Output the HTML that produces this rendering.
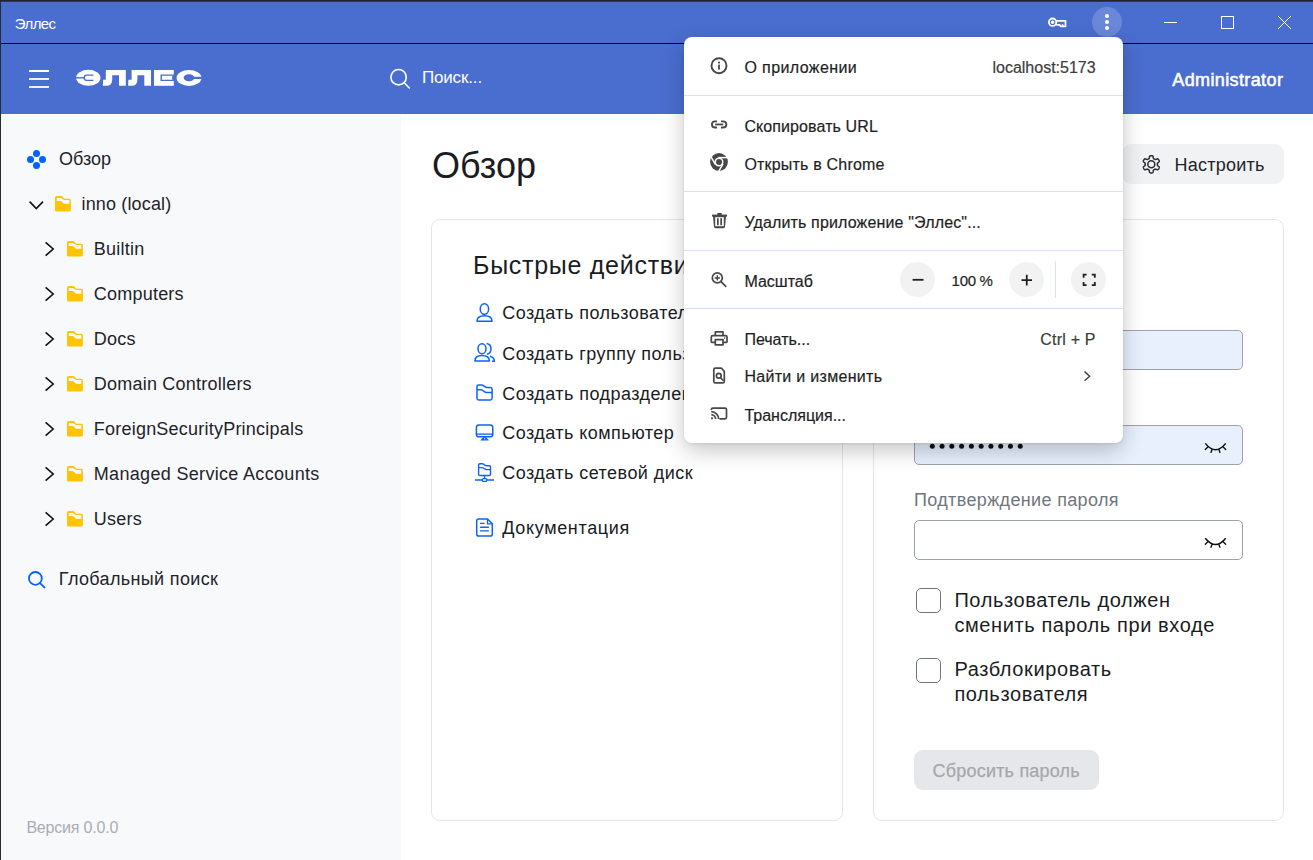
<!DOCTYPE html>
<html><head><meta charset="utf-8">
<style>
*{box-sizing:border-box;margin:0;padding:0}
html,body{width:1313px;height:860px;overflow:hidden;background:#fff;font-family:"Liberation Sans",sans-serif;color:#1f2329}
.abs{position:absolute}
#topborder{position:absolute;left:0;top:0;width:1313px;height:2px;background:linear-gradient(#232527 0 1px,#2e3850 1px 2px)}
#leftborder{position:absolute;left:0;top:0;width:1px;height:860px;background:#2b2b2b}
#titlebar{position:absolute;left:1px;top:1px;width:1312px;height:42px;background:#4a6ecf}
#tbline{position:absolute;left:1px;top:43px;width:1312px;height:1px;background:#000}
#header{position:absolute;left:1px;top:44px;width:1312px;height:70px;background:#4a6ecf}
#sidebar{position:absolute;left:1px;top:115px;width:400px;height:745px;background:#f8f9fb}
.t{position:absolute;white-space:nowrap;line-height:1}
.card{position:absolute;border:1px solid #e4e6ea;border-radius:9px;background:#fff}
</style></head><body>
<div id="titlebar"></div>
<div id="tbline"></div>
<div id="header"></div>
<div id="sidebar"></div>
<div class="t" style="left:14.8px;top:16.45px;font-size:15px;color:#ffffff;letter-spacing:-0.6px;">Эллес</div>
<svg class="abs" style="left:1040px;top:10px" width="34" height="24" viewBox="1040 10 34 24">
<circle cx="1052.6" cy="22.2" r="3.7" fill="none" stroke="#fff" stroke-width="1.8"/>
<circle cx="1052.6" cy="22.2" r="1.7" fill="#fff"/>
<path d="M1056.2 20.8 H1065.5 V26.3 H1060.6 L1059.6 24.8 H1056.2" fill="none" stroke="#fff" stroke-width="1.8" stroke-linejoin="round"/>
<rect x="1061.8" y="24.2" width="1.6" height="2.4" fill="#fff"/>
</svg><div class="abs" style="left:1092px;top:6.5px;width:30px;height:30px;border-radius:50%;background:rgba(255,255,255,0.18)"></div>
<div class="abs" style="left:1105px;top:14px;width:4px;height:4px;border-radius:50%;background:#fff"></div>
<div class="abs" style="left:1105px;top:20px;width:4px;height:4px;border-radius:50%;background:#fff"></div>
<div class="abs" style="left:1105px;top:26px;width:4px;height:4px;border-radius:50%;background:#fff"></div>
<svg class="abs" style="left:1150px;top:5px" width="160" height="34" viewBox="1150 5 160 34">
<path d="M1164 22.5 H1177" stroke="#fff" stroke-width="1"/>
<rect x="1221.5" y="16.5" width="12" height="12" fill="none" stroke="#fff" stroke-width="1"/>
<path d="M1278 16 L1291 29 M1291 16 L1278 29" stroke="#fff" stroke-width="1"/>
</svg><svg class="abs" style="left:25px;top:64px" width="30" height="30" viewBox="25 64 30 30">
<rect x="29" y="70" width="20" height="2" fill="#fff"/><rect x="29" y="78" width="20" height="2" fill="#eef0fa"/><rect x="29" y="86" width="20" height="2" fill="#eef0fa"/>
</svg><svg class="abs" style="left:70px;top:62px" width="140" height="32" viewBox="70 62 140 32">
<g fill="#fff">
 <ellipse cx="88.3" cy="77.8" rx="12.2" ry="8"/>
 <path d="M102.8 85.8 L103.2 79.7 H105.8 V70 H125.8 V85.8 H119 V75.2 H112.2 V79.5 Q112.2 85.8 106.5 85.8 Z"/>
 <path d="M128.1 85.8 L128.4 79.7 H131.6 V70 H151 V85.8 H144.3 V75.2 H137.4 V79.5 Q137.4 85.8 131.8 85.8 Z"/>
 <path d="M154 70 H173.8 V85.8 H154 Z"/>
 <ellipse cx="189" cy="77.9" rx="12.4" ry="8"/>
</g>
<g fill="none" stroke="#4a6ecf" stroke-width="1.4">
 <path d="M75 77.8 H84.3"/>
 <path d="M93.5 75.1 H86.5 Q84.2 75.1 84.2 77.8 Q84.2 80.4 86.5 80.4 H93.5"/>
 <path d="M175 75.1 H161.2 V80.4 H175"/>
</g>
<g fill="#4a6ecf">
 <rect x="172.2" y="75.6" width="3" height="4.3"/>
 <ellipse cx="189" cy="77.7" rx="5.4" ry="3.5"/>
 <rect x="189" y="76.8" width="14" height="2.2"/>
</g>
</svg><svg class="abs" style="left:385px;top:64px" width="30" height="30" viewBox="385 64 30 30">
<circle cx="398.6" cy="77.2" r="7.7" fill="none" stroke="#fff" stroke-width="1.6"/>
<path d="M404.2 82.8 L409.3 88" stroke="#fff" stroke-width="1.6" stroke-linecap="round"/>
</svg><div class="t" style="left:421.9px;top:68.55px;font-size:17px;color:#ffffff;letter-spacing:-0.15px;">Поиск...</div>
<div class="t" style="left:1172.3px;top:70.70px;font-size:18px;color:#ffffff;letter-spacing:0.38px;-webkit-text-stroke:0.55px #fff;">Administrator</div>
<svg class="abs" style="left:22px;top:145px" width="30" height="30" viewBox="22 145 30 30">
<g fill="#0062ff"><circle cx="36.5" cy="153.4" r="3.5"/><circle cx="30.5" cy="159.4" r="3.5"/><circle cx="42.5" cy="159.4" r="3.5"/><circle cx="36.5" cy="165.4" r="3.5"/></g>
</svg><div class="t" style="left:59px;top:150.00px;font-size:18px;color:#1f2329;">Обзор</div>
<svg class="abs" style="left:25px;top:195px" width="24" height="20" viewBox="25 195 24 20">
<path d="M29.6 201.6 L36.3 208.6 L43 201.6" fill="none" stroke="#111" stroke-width="1.6"/>
</svg><svg class="abs" style="left:55px;top:196.3px" width="16" height="16" viewBox="0 0 16 16">
<path d="M0,1.5 Q0,0 1.5,0 H5.8 Q6.6,0 7.3,0.6 L8.6,1.9 Q9.3,2.8 10.3,2.8 H14.4 Q15.9,2.8 15.9,4.3 V14.1 Q15.9,15.6 14.4,15.6 H1.5 Q0,15.6 0,14.1 Z" fill="#ffc400"/>
<path d="M1.8,2 H5.6 Q6.4,2 7.1,2.7 L8.3,3.6 Q8.9,4.1 9.8,4.1 H14.3 V7.8 H9.8 Q8.9,7.8 8.3,7.2 L7.1,6 Q6.4,5.1 5.6,5.1 H1.8 Z" fill="#f8f9fb"/>
</svg><div class="t" style="left:81.5px;top:194.90px;font-size:18px;color:#1f2329;letter-spacing:0.15px;">inno (local)</div>
<svg class="abs" style="left:40px;top:239px" width="20" height="20" viewBox="0 0 20 20">
<path d="M5.6 3.3 L13.2 10 L5.6 16.7" fill="none" stroke="#111" stroke-width="1.6"/>
</svg><svg class="abs" style="left:67px;top:241px" width="16" height="16" viewBox="0 0 16 16">
<path d="M0,1.5 Q0,0 1.5,0 H5.8 Q6.6,0 7.3,0.6 L8.6,1.9 Q9.3,2.8 10.3,2.8 H14.4 Q15.9,2.8 15.9,4.3 V14.1 Q15.9,15.6 14.4,15.6 H1.5 Q0,15.6 0,14.1 Z" fill="#ffc400"/>
<path d="M1.8,2 H5.6 Q6.4,2 7.1,2.7 L8.3,3.6 Q8.9,4.1 9.8,4.1 H14.3 V7.8 H9.8 Q8.9,7.8 8.3,7.2 L7.1,6 Q6.4,5.1 5.6,5.1 H1.8 Z" fill="#f8f9fb"/>
</svg><div class="t" style="left:93.8px;top:240.30px;font-size:18px;color:#1f2329;letter-spacing:0.22px;">Builtin</div>
<svg class="abs" style="left:40px;top:284px" width="20" height="20" viewBox="0 0 20 20">
<path d="M5.6 3.3 L13.2 10 L5.6 16.7" fill="none" stroke="#111" stroke-width="1.6"/>
</svg><svg class="abs" style="left:67px;top:286px" width="16" height="16" viewBox="0 0 16 16">
<path d="M0,1.5 Q0,0 1.5,0 H5.8 Q6.6,0 7.3,0.6 L8.6,1.9 Q9.3,2.8 10.3,2.8 H14.4 Q15.9,2.8 15.9,4.3 V14.1 Q15.9,15.6 14.4,15.6 H1.5 Q0,15.6 0,14.1 Z" fill="#ffc400"/>
<path d="M1.8,2 H5.6 Q6.4,2 7.1,2.7 L8.3,3.6 Q8.9,4.1 9.8,4.1 H14.3 V7.8 H9.8 Q8.9,7.8 8.3,7.2 L7.1,6 Q6.4,5.1 5.6,5.1 H1.8 Z" fill="#f8f9fb"/>
</svg><div class="t" style="left:93.8px;top:285.30px;font-size:18px;color:#1f2329;letter-spacing:0.22px;">Computers</div>
<svg class="abs" style="left:40px;top:329px" width="20" height="20" viewBox="0 0 20 20">
<path d="M5.6 3.3 L13.2 10 L5.6 16.7" fill="none" stroke="#111" stroke-width="1.6"/>
</svg><svg class="abs" style="left:67px;top:331px" width="16" height="16" viewBox="0 0 16 16">
<path d="M0,1.5 Q0,0 1.5,0 H5.8 Q6.6,0 7.3,0.6 L8.6,1.9 Q9.3,2.8 10.3,2.8 H14.4 Q15.9,2.8 15.9,4.3 V14.1 Q15.9,15.6 14.4,15.6 H1.5 Q0,15.6 0,14.1 Z" fill="#ffc400"/>
<path d="M1.8,2 H5.6 Q6.4,2 7.1,2.7 L8.3,3.6 Q8.9,4.1 9.8,4.1 H14.3 V7.8 H9.8 Q8.9,7.8 8.3,7.2 L7.1,6 Q6.4,5.1 5.6,5.1 H1.8 Z" fill="#f8f9fb"/>
</svg><div class="t" style="left:93.8px;top:330.30px;font-size:18px;color:#1f2329;letter-spacing:0.22px;">Docs</div>
<svg class="abs" style="left:40px;top:374px" width="20" height="20" viewBox="0 0 20 20">
<path d="M5.6 3.3 L13.2 10 L5.6 16.7" fill="none" stroke="#111" stroke-width="1.6"/>
</svg><svg class="abs" style="left:67px;top:376px" width="16" height="16" viewBox="0 0 16 16">
<path d="M0,1.5 Q0,0 1.5,0 H5.8 Q6.6,0 7.3,0.6 L8.6,1.9 Q9.3,2.8 10.3,2.8 H14.4 Q15.9,2.8 15.9,4.3 V14.1 Q15.9,15.6 14.4,15.6 H1.5 Q0,15.6 0,14.1 Z" fill="#ffc400"/>
<path d="M1.8,2 H5.6 Q6.4,2 7.1,2.7 L8.3,3.6 Q8.9,4.1 9.8,4.1 H14.3 V7.8 H9.8 Q8.9,7.8 8.3,7.2 L7.1,6 Q6.4,5.1 5.6,5.1 H1.8 Z" fill="#f8f9fb"/>
</svg><div class="t" style="left:93.8px;top:375.30px;font-size:18px;color:#1f2329;letter-spacing:0.22px;">Domain Controllers</div>
<svg class="abs" style="left:40px;top:419px" width="20" height="20" viewBox="0 0 20 20">
<path d="M5.6 3.3 L13.2 10 L5.6 16.7" fill="none" stroke="#111" stroke-width="1.6"/>
</svg><svg class="abs" style="left:67px;top:421px" width="16" height="16" viewBox="0 0 16 16">
<path d="M0,1.5 Q0,0 1.5,0 H5.8 Q6.6,0 7.3,0.6 L8.6,1.9 Q9.3,2.8 10.3,2.8 H14.4 Q15.9,2.8 15.9,4.3 V14.1 Q15.9,15.6 14.4,15.6 H1.5 Q0,15.6 0,14.1 Z" fill="#ffc400"/>
<path d="M1.8,2 H5.6 Q6.4,2 7.1,2.7 L8.3,3.6 Q8.9,4.1 9.8,4.1 H14.3 V7.8 H9.8 Q8.9,7.8 8.3,7.2 L7.1,6 Q6.4,5.1 5.6,5.1 H1.8 Z" fill="#f8f9fb"/>
</svg><div class="t" style="left:93.8px;top:420.30px;font-size:18px;color:#1f2329;letter-spacing:0.22px;">ForeignSecurityPrincipals</div>
<svg class="abs" style="left:40px;top:464px" width="20" height="20" viewBox="0 0 20 20">
<path d="M5.6 3.3 L13.2 10 L5.6 16.7" fill="none" stroke="#111" stroke-width="1.6"/>
</svg><svg class="abs" style="left:67px;top:466px" width="16" height="16" viewBox="0 0 16 16">
<path d="M0,1.5 Q0,0 1.5,0 H5.8 Q6.6,0 7.3,0.6 L8.6,1.9 Q9.3,2.8 10.3,2.8 H14.4 Q15.9,2.8 15.9,4.3 V14.1 Q15.9,15.6 14.4,15.6 H1.5 Q0,15.6 0,14.1 Z" fill="#ffc400"/>
<path d="M1.8,2 H5.6 Q6.4,2 7.1,2.7 L8.3,3.6 Q8.9,4.1 9.8,4.1 H14.3 V7.8 H9.8 Q8.9,7.8 8.3,7.2 L7.1,6 Q6.4,5.1 5.6,5.1 H1.8 Z" fill="#f8f9fb"/>
</svg><div class="t" style="left:93.8px;top:465.30px;font-size:18px;color:#1f2329;letter-spacing:0.32px;">Managed Service Accounts</div>
<svg class="abs" style="left:40px;top:509px" width="20" height="20" viewBox="0 0 20 20">
<path d="M5.6 3.3 L13.2 10 L5.6 16.7" fill="none" stroke="#111" stroke-width="1.6"/>
</svg><svg class="abs" style="left:67px;top:511px" width="16" height="16" viewBox="0 0 16 16">
<path d="M0,1.5 Q0,0 1.5,0 H5.8 Q6.6,0 7.3,0.6 L8.6,1.9 Q9.3,2.8 10.3,2.8 H14.4 Q15.9,2.8 15.9,4.3 V14.1 Q15.9,15.6 14.4,15.6 H1.5 Q0,15.6 0,14.1 Z" fill="#ffc400"/>
<path d="M1.8,2 H5.6 Q6.4,2 7.1,2.7 L8.3,3.6 Q8.9,4.1 9.8,4.1 H14.3 V7.8 H9.8 Q8.9,7.8 8.3,7.2 L7.1,6 Q6.4,5.1 5.6,5.1 H1.8 Z" fill="#f8f9fb"/>
</svg><div class="t" style="left:93.8px;top:510.30px;font-size:18px;color:#1f2329;letter-spacing:0.22px;">Users</div>
<svg class="abs" style="left:22px;top:564px" width="30" height="30" viewBox="22 564 30 30">
<circle cx="35.4" cy="578.4" r="6.4" fill="none" stroke="#0062ff" stroke-width="1.8"/>
<path d="M40 583.2 L44.4 587.4" stroke="#0062ff" stroke-width="1.8" stroke-linecap="round"/>
</svg><div class="t" style="left:58.8px;top:570.20px;font-size:18px;color:#1f2329;letter-spacing:0.35px;">Глобальный поиск</div>
<div class="t" style="left:26.4px;top:820.40px;font-size:16px;color:#a9adb3;letter-spacing:-0.2px;">Версия 0.0.0</div>
<div class="t" style="left:432px;top:148.20px;font-size:36px;color:#1a1c1f;">Обзор</div>
<div class="abs" style="left:1122px;top:144px;width:162px;height:40px;border-radius:9px;background:#f1f2f4"></div><svg class="abs" style="left:1136px;top:149px" width="30" height="30" viewBox="1136 149 30 30">
<path d="M1157.35 164.30 L1157.35 164.46 L1157.35 164.62 L1157.35 164.78 L1157.36 164.94 L1157.38 165.10 L1157.43 165.27 L1157.53 165.45 L1157.72 165.66 L1158.02 165.91 L1158.40 166.20 L1158.77 166.51 L1159.04 166.81 L1159.18 167.09 L1159.23 167.34 L1159.22 167.58 L1159.16 167.80 L1159.09 168.02 L1159.00 168.22 L1158.90 168.43 L1158.79 168.62 L1158.67 168.82 L1158.55 169.01 L1158.41 169.19 L1158.26 169.36 L1158.10 169.52 L1157.90 169.65 L1157.66 169.73 L1157.35 169.75 L1156.95 169.66 L1156.50 169.50 L1156.06 169.31 L1155.69 169.18 L1155.41 169.12 L1155.20 169.12 L1155.03 169.16 L1154.88 169.23 L1154.74 169.30 L1154.60 169.38 L1154.46 169.46 L1154.33 169.54 L1154.19 169.62 L1154.05 169.70 L1153.91 169.78 L1153.78 169.86 L1153.65 169.96 L1153.52 170.09 L1153.41 170.27 L1153.33 170.54 L1153.26 170.92 L1153.20 171.40 L1153.12 171.88 L1152.99 172.26 L1152.82 172.52 L1152.63 172.69 L1152.42 172.80 L1152.20 172.86 L1151.98 172.90 L1151.75 172.93 L1151.53 172.95 L1151.30 172.95 L1151.07 172.95 L1150.85 172.93 L1150.62 172.90 L1150.40 172.86 L1150.18 172.80 L1149.97 172.69 L1149.78 172.52 L1149.61 172.26 L1149.48 171.88 L1149.40 171.40 L1149.34 170.92 L1149.27 170.54 L1149.19 170.27 L1149.08 170.09 L1148.95 169.96 L1148.82 169.86 L1148.69 169.78 L1148.55 169.70 L1148.41 169.62 L1148.27 169.54 L1148.14 169.46 L1148.00 169.38 L1147.86 169.30 L1147.72 169.23 L1147.57 169.16 L1147.40 169.12 L1147.19 169.12 L1146.91 169.18 L1146.54 169.31 L1146.10 169.50 L1145.65 169.66 L1145.25 169.75 L1144.94 169.73 L1144.70 169.65 L1144.50 169.52 L1144.34 169.36 L1144.19 169.19 L1144.05 169.01 L1143.93 168.82 L1143.81 168.62 L1143.70 168.43 L1143.60 168.22 L1143.51 168.02 L1143.44 167.80 L1143.38 167.58 L1143.37 167.34 L1143.42 167.09 L1143.56 166.81 L1143.83 166.51 L1144.20 166.20 L1144.58 165.91 L1144.88 165.66 L1145.07 165.45 L1145.17 165.27 L1145.22 165.10 L1145.24 164.94 L1145.25 164.78 L1145.25 164.62 L1145.25 164.46 L1145.25 164.30 L1145.25 164.14 L1145.25 163.98 L1145.25 163.82 L1145.24 163.66 L1145.22 163.50 L1145.17 163.33 L1145.07 163.15 L1144.88 162.94 L1144.58 162.69 L1144.20 162.40 L1143.83 162.09 L1143.56 161.79 L1143.42 161.51 L1143.37 161.26 L1143.38 161.02 L1143.44 160.80 L1143.51 160.58 L1143.60 160.38 L1143.70 160.17 L1143.81 159.98 L1143.93 159.78 L1144.05 159.59 L1144.19 159.41 L1144.34 159.24 L1144.50 159.08 L1144.70 158.95 L1144.94 158.87 L1145.25 158.85 L1145.65 158.94 L1146.10 159.10 L1146.54 159.29 L1146.91 159.42 L1147.19 159.48 L1147.40 159.48 L1147.57 159.44 L1147.72 159.37 L1147.86 159.30 L1148.00 159.22 L1148.14 159.14 L1148.27 159.06 L1148.41 158.98 L1148.55 158.90 L1148.69 158.82 L1148.82 158.74 L1148.95 158.64 L1149.08 158.51 L1149.19 158.33 L1149.27 158.06 L1149.34 157.68 L1149.40 157.20 L1149.48 156.72 L1149.61 156.34 L1149.78 156.08 L1149.97 155.91 L1150.18 155.80 L1150.40 155.74 L1150.62 155.70 L1150.85 155.67 L1151.07 155.65 L1151.30 155.65 L1151.53 155.65 L1151.75 155.67 L1151.98 155.70 L1152.20 155.74 L1152.42 155.80 L1152.63 155.91 L1152.82 156.08 L1152.99 156.34 L1153.12 156.72 L1153.20 157.20 L1153.26 157.68 L1153.33 158.06 L1153.41 158.33 L1153.52 158.51 L1153.65 158.64 L1153.78 158.74 L1153.91 158.82 L1154.05 158.90 L1154.19 158.98 L1154.33 159.06 L1154.46 159.14 L1154.60 159.22 L1154.74 159.30 L1154.88 159.37 L1155.03 159.44 L1155.20 159.48 L1155.41 159.48 L1155.69 159.42 L1156.06 159.29 L1156.50 159.10 L1156.95 158.94 L1157.35 158.85 L1157.66 158.87 L1157.90 158.95 L1158.10 159.08 L1158.26 159.24 L1158.41 159.41 L1158.55 159.59 L1158.67 159.78 L1158.79 159.98 L1158.90 160.17 L1159.00 160.38 L1159.09 160.58 L1159.16 160.80 L1159.22 161.02 L1159.23 161.26 L1159.18 161.51 L1159.04 161.79 L1158.77 162.09 L1158.40 162.40 L1158.02 162.69 L1157.72 162.94 L1157.53 163.15 L1157.43 163.33 L1157.38 163.50 L1157.36 163.66 L1157.35 163.82 L1157.35 163.98 L1157.35 164.14 Z" fill="none" stroke="#2a2d31" stroke-width="1.5" stroke-linejoin="round"/>
<circle cx="1151.3" cy="164.3" r="3.5" fill="none" stroke="#2a2d31" stroke-width="1.5"/>
</svg><div class="t" style="left:1174.4px;top:155.70px;font-size:18px;color:#1f2329;letter-spacing:0.25px;">Настроить</div>
<div class="card" style="left:431px;top:219px;width:412px;height:602px"></div><div class="t" style="left:473px;top:252.95px;font-size:25px;color:#1a1c1f;letter-spacing:0.72px;">Быстрые действия</div>
<svg class="abs" style="left:0;top:0" width="1313" height="860" viewBox="0 0 1313 860"><ellipse cx="484.4" cy="309" rx="4.2" ry="5.3" fill="none" stroke="#0a64f5" stroke-width="1.5"/>
<path d="M477 321.2 Q477 315.8 484.5 315.8 Q492 315.8 492 321.2 Z" fill="none" stroke="#0a64f5" stroke-width="1.5" stroke-linejoin="round"/><ellipse cx="482" cy="348.8" rx="4" ry="5" fill="none" stroke="#0a64f5" stroke-width="1.5"/>
<path d="M474.9 361 Q474.9 355.5 482 355.5 Q489.4 355.5 489.4 361 Z" fill="none" stroke="#0a64f5" stroke-width="1.5" stroke-linejoin="round"/>
<path d="M486.6 343.5 Q491 344.1 491 348.8 Q491 353.6 486.9 354.2 M490 356.3 Q494.4 357.6 494.4 361.2 H492" fill="none" stroke="#0a64f5" stroke-width="1.5"/><path d="M477 398.2 V386.6 Q477 384.9 478.7 384.9 H481.3 Q482.9 384.9 484 386.1 Q485.2 387.4 487 387.4 H490.4 Q492.1 387.4 492.1 389.1 V398.2 Q492.1 399.9 490.4 399.9 H478.7 Q477 399.9 477 398.2 Z" fill="none" stroke="#0a64f5" stroke-width="1.5" stroke-linejoin="round"/>
<path d="M477 389.8 H480.8 Q482.4 389.8 483.5 391.1 Q484.7 392.4 486.5 392.4 H492.1" fill="none" stroke="#0a64f5" stroke-width="1.5"/><rect x="476.4" y="424.9" width="16.4" height="11.9" rx="2.6" fill="none" stroke="#0a64f5" stroke-width="1.5"/>
<path d="M476.6 434.1 H492.6" stroke="#0a64f5" stroke-width="1.3"/>
<path d="M482.9 437.2 H486.3 L488.9 440.6 H480.3 Z" fill="#0a64f5"/>
<rect x="484.2" y="438.1" width="1" height="1.2" fill="#fff"/><path d="M478.6 474.3 V465 Q478.6 463.8 479.8 463.8 H482 Q483.3 463.8 484.3 464.8 Q485.4 465.8 486.9 465.8 H489.3 Q490.5 465.8 490.5 467 V474.3 Q490.5 475.5 489.3 475.5 H479.8 Q478.6 475.5 478.6 474.3 Z" fill="none" stroke="#0a64f5" stroke-width="1.4" stroke-linejoin="round"/>
<path d="M478.6 467.6 H481.8 Q483.1 467.6 484.1 468.6 Q485.2 469.6 486.7 469.6 H490.5" fill="none" stroke="#0a64f5" stroke-width="1.4"/>
<path d="M484.5 475 V478.5 M475 480 H482.3 M486.7 480 H494" stroke="#0a64f5" stroke-width="1.4"/>
<rect x="482.3" y="478.6" width="4.4" height="2.8" rx="1" fill="none" stroke="#0a64f5" stroke-width="1.3"/><path d="M478.7 519 H487.5 L492.3 523.8 V534 Q492.3 536.1 490.3 536.1 H478.7 Q476.7 536.1 476.7 534 V521 Q476.7 519 478.7 519 Z" fill="none" stroke="#0a64f5" stroke-width="1.5" stroke-linejoin="round"/>
<path d="M487.5 519 V523.8 H492.3" fill="none" stroke="#0a64f5" stroke-width="1.3"/>
<path d="M480.6 523.4 H484 M480.6 527.3 H488.4 M480.6 530.9 H488.4" stroke-linecap="round" stroke="#0a64f5" stroke-width="1.4"/></svg><div class="t" style="left:502.3px;top:304.40px;font-size:18px;color:#1a1c1f;letter-spacing:0.45px;">Создать пользователя</div>
<div class="t" style="left:502.3px;top:344.50px;font-size:18px;color:#1a1c1f;letter-spacing:0.45px;">Создать группу пользователей</div>
<div class="t" style="left:502.3px;top:384.60px;font-size:18px;color:#1a1c1f;letter-spacing:0.45px;">Создать подразделение</div>
<div class="t" style="left:502.3px;top:424.30px;font-size:18px;color:#1a1c1f;letter-spacing:0.45px;">Создать компьютер</div>
<div class="t" style="left:502.3px;top:464.00px;font-size:18px;color:#1a1c1f;letter-spacing:0.45px;">Создать сетевой диск</div>
<div class="t" style="left:502.3px;top:519.40px;font-size:18px;color:#1a1c1f;letter-spacing:0.65px;">Документация</div>
<div class="card" style="left:873px;top:219px;width:411px;height:602px"></div><div class="t" style="left:914px;top:270.70px;font-size:18px;color:#6b7075;letter-spacing:0.35px;">Новый пароль</div>
<div class="abs" style="left:914px;top:330px;width:329px;height:40px;border:1px solid #9ea3aa;border-radius:5px;background:#e8f0fe"></div><div class="t" style="left:914px;top:396.70px;font-size:18px;color:#6b7075;letter-spacing:0.35px;">Пароль</div>
<div class="abs" style="left:914px;top:425px;width:329px;height:40px;border:1px solid #9ea3aa;border-radius:5px;background:#e8f0fe"></div><div class="t" style="left:914px;top:490.50px;font-size:18px;color:#71767c;letter-spacing:0.35px;">Подтверждение пароля</div>
<div class="abs" style="left:914px;top:520px;width:329px;height:40px;border:1px solid #9ea3aa;border-radius:5px;background:#fff"></div><div class="abs" style="left:915.5px;top:588px;width:25px;height:25px;border:1.3px solid #70757b;border-radius:5px;background:#fff"></div><div class="t" style="left:954.4px;top:589.80px;font-size:20px;color:#1a1c1f;letter-spacing:0.6px;">Пользователь должен</div>
<div class="t" style="left:954.4px;top:614.60px;font-size:20px;color:#1a1c1f;letter-spacing:0.6px;">сменить пароль при входе</div>
<div class="abs" style="left:915.5px;top:658px;width:25px;height:25px;border:1.3px solid #70757b;border-radius:5px;background:#fff"></div><div class="t" style="left:954.4px;top:659.40px;font-size:20px;color:#1a1c1f;letter-spacing:0.6px;">Разблокировать</div>
<div class="t" style="left:954.4px;top:684.10px;font-size:20px;color:#1a1c1f;letter-spacing:0.6px;">пользователя</div>
<div class="abs" style="left:914px;top:750px;width:185px;height:40px;border-radius:9px;background:#e6e7ea"></div><div class="t" style="left:932.6px;top:761.70px;font-size:18px;color:#a4a7ac;letter-spacing:0.2px;-webkit-text-stroke:0.25px #a4a7ac;">Сбросить пароль</div>
<svg class="abs" style="left:0;top:0" width="1313" height="860" viewBox="0 0 1313 860"><circle cx="932.30" cy="446.3" r="2.5" fill="#111"/><circle cx="942.07" cy="446.3" r="2.5" fill="#111"/><circle cx="951.84" cy="446.3" r="2.5" fill="#111"/><circle cx="961.61" cy="446.3" r="2.5" fill="#111"/><circle cx="971.38" cy="446.3" r="2.5" fill="#111"/><circle cx="981.15" cy="446.3" r="2.5" fill="#111"/><circle cx="990.92" cy="446.3" r="2.5" fill="#111"/><circle cx="1000.69" cy="446.3" r="2.5" fill="#111"/><circle cx="1010.46" cy="446.3" r="2.5" fill="#111"/><circle cx="1020.23" cy="446.3" r="2.5" fill="#111"/><path d="M1205.3 443.4 Q1215.5 456.0 1225.7 443.4" fill="none" stroke="#111" stroke-width="1.5"/>
<path d="M1207.8 447.0 L1205.3 449.4 M1212 449.59999999999997 L1211 452.4 M1218.9 449.59999999999997 L1219.9 452.4 M1223.2 447.0 L1225.7 449.4" stroke="#111" stroke-width="1.4" stroke-linecap="round"/><path d="M1205.3 538.2 Q1215.5 550.8000000000001 1225.7 538.2" fill="none" stroke="#111" stroke-width="1.5"/>
<path d="M1207.8 541.8000000000001 L1205.3 544.2 M1212 544.4000000000001 L1211 547.2 M1218.9 544.4000000000001 L1219.9 547.2 M1223.2 541.8000000000001 L1225.7 544.2" stroke="#111" stroke-width="1.4" stroke-linecap="round"/></svg>
<div class="abs" style="left:684px;top:37px;width:439px;height:406px;border-radius:8px;background:#fff;box-shadow:0 8px 22px rgba(0,0,0,0.22),0 1px 3px rgba(0,0,0,0.08)"></div><div class="abs" style="left:684px;top:95px;width:439px;height:1px;background:#d3e3fd"></div><div class="abs" style="left:684px;top:191px;width:439px;height:1px;background:#d3e3fd"></div><div class="abs" style="left:684px;top:250px;width:439px;height:1px;background:#d3e3fd"></div><div class="abs" style="left:684px;top:308px;width:439px;height:1px;background:#d3e3fd"></div><div class="abs" style="left:1055px;top:261px;width:1px;height:37px;background:#d3e3fd"></div><div class="abs" style="left:900.0px;top:262px;width:35px;height:35px;border-radius:50%;background:#f2f2f2"></div><div class="abs" style="left:1009.0px;top:262px;width:35px;height:35px;border-radius:50%;background:#f2f2f2"></div><div class="abs" style="left:1071.3px;top:262px;width:35px;height:35px;border-radius:50%;background:#f2f2f2"></div><svg class="abs" style="left:0;top:0" width="1313" height="860" viewBox="0 0 1313 860">
<g fill="none" stroke="#474747" stroke-width="1.7">
 <circle cx="719" cy="65.7" r="7.5" stroke-width="1.9"/>
</g>
<rect x="718.1" y="64.6" width="1.8" height="5" fill="#474747"/>
<circle cx="719" cy="62.6" r="1.05" fill="#474747"/>
<!-- link -->
<g fill="none" stroke="#474747" stroke-width="1.8">
 <path d="M717 121.4 H715 Q711.9 121.4 711.9 124.45 Q711.9 127.5 715 127.5 H717"/>
 <path d="M721 121.4 H723 Q726.4 121.4 726.4 124.45 Q726.4 127.5 723 127.5 H721"/>
 <path d="M715.2 124.45 H723.2"/>
</g>
<!-- chrome -->
<circle cx="719" cy="162" r="8.9" fill="#474747"/>
<circle cx="719" cy="162" r="4.5" fill="#fff"/>
<circle cx="719" cy="162" r="3.0" fill="#474747"/>
<g stroke="#fff" stroke-width="1.5" fill="none">
 <path d="M718.5 157.6 H728.5"/>
 <path d="M723 163.8 L717.9 172.6"/>
 <path d="M715.5 164.6 L710.3 155.7"/>
</g>
<!-- trash -->
<g fill="#474747">
 <rect x="717.3" y="213" width="4.4" height="2" />
 <rect x="712" y="214.6" width="15" height="2"/>
 <path d="M713 216 H726 L725.1 226.6 Q725 228.2 723.4 228.2 H715.6 Q714 228.2 713.9 226.6 Z"/>
</g>
<rect x="715.2" y="217.2" width="8.6" height="9" fill="#fff"/>
<rect x="717" y="218.2" width="1.7" height="7" fill="#474747"/>
<rect x="720.3" y="218.2" width="1.7" height="7" fill="#474747"/>
<!-- zoom -->
<g fill="none" stroke="#474747" stroke-width="1.7">
 <circle cx="717.3" cy="277.9" r="5"/>
 <path d="M721 281.6 L725.8 286.4" stroke-linecap="round"/>
 <path d="M714.6 277.9 H720 M717.3 275.2 V280.6" stroke-width="1.5"/>
</g>
<!-- minus / plus / fullscreen -->
<path d="M912.6 279.8 H923.5" stroke="#1f1f1f" stroke-width="1.8"/>
<path d="M1021.5 280.1 H1032 M1026.75 274.8 V285.5" stroke="#1f1f1f" stroke-width="1.8"/>
<g fill="none" stroke="#1f1f1f" stroke-width="1.8">
 <path d="M1083.6 277.7 V274.7 H1086.6 M1091.8 274.7 H1094.8 V277.7 M1094.8 282.1 V285.1 H1091.8 M1086.6 285.1 H1083.6 V282.1"/>
</g>
<!-- printer -->
<g fill="none" stroke="#474747" stroke-width="1.7" stroke-linejoin="round">
 <path d="M715.3 335.4 V331.8 H723 V335.4"/>
 <path d="M715 342.4 H712.3 Q711.3 342.4 711.3 341.4 V337 Q711.3 335.6 712.7 335.6 H725.6 Q727 335.6 727 337 V341.4 Q727 342.4 726 342.4 H723.3"/>
 <rect x="715.3" y="339.6" width="7.7" height="5.2"/>
</g>
<circle cx="724.6" cy="338.1" r="0.8" fill="#474747"/>
<!-- find doc -->
<g fill="none" stroke="#474747" stroke-width="1.7" stroke-linejoin="round">
 <path d="M715.3 368.2 H721.5 L724.3 371.4 V381.4 Q724.3 382.9 722.8 382.9 H715.3 Q713.8 382.9 713.8 381.4 V369.7 Q713.8 368.2 715.3 368.2 Z"/>
 <circle cx="718.8" cy="375.8" r="2.4"/>
 <path d="M720.6 377.7 L723.4 380.8"/>
</g>
<!-- cast -->
<g fill="none" stroke="#474747" stroke-width="1.7">
 <path d="M711.4 410 V409.6 Q711.4 408.1 712.9 408.1 H725 Q726.5 408.1 726.5 409.6 V417.3 Q726.5 418.8 725 418.8 H719.4"/>
 <path d="M711.3 411.6 A7.4 7.4 0 0 1 718.6 419.1"/>
 <path d="M711.3 414.7 A4.3 4.3 0 0 1 715.6 419.1"/>
</g>
<circle cx="712" cy="418.3" r="1.1" fill="#474747"/>
<!-- chevron -->
<path d="M1084.6 371.6 L1089.6 376.2 L1084.6 380.8" fill="none" stroke="#474747" stroke-width="1.5"/>
</svg><div class="t" style="top:59.80px;font-size:16px;color:#1f1f1f;left:744.4px;letter-spacing:0.4px;-webkit-text-stroke:0.2px #1f1f1f;">О приложении</div>
<div class="t" style="top:59.80px;font-size:16px;color:#3c3c3c;right:217.4000000000001px;-webkit-text-stroke:0.2px #3c3c3c;">localhost:5173</div>
<div class="t" style="top:118.80px;font-size:16px;color:#1f1f1f;left:744.4px;letter-spacing:0.1px;-webkit-text-stroke:0.2px #1f1f1f;">Скопировать URL</div>
<div class="t" style="top:156.60px;font-size:16px;color:#1f1f1f;left:744.4px;letter-spacing:0.2px;-webkit-text-stroke:0.2px #1f1f1f;">Открыть в Chrome</div>
<div class="t" style="top:215.10px;font-size:16px;color:#1f1f1f;left:744.4px;letter-spacing:0.15px;-webkit-text-stroke:0.2px #1f1f1f;">Удалить приложение "Эллес"...</div>
<div class="t" style="top:273.90px;font-size:16px;color:#1f1f1f;left:744.4px;-webkit-text-stroke:0.2px #1f1f1f;">Масштаб</div>
<div class="t" style="top:273.45px;font-size:15px;color:#1f1f1f;left:951.6px;letter-spacing:-0.3px;-webkit-text-stroke:0.2px #1f1f1f;">100 %</div>
<div class="t" style="top:332.40px;font-size:16px;color:#1f1f1f;left:744.4px;-webkit-text-stroke:0.2px #1f1f1f;">Печать...</div>
<div class="t" style="top:332.40px;font-size:16px;color:#3c3c3c;right:217.29999999999995px;letter-spacing:0.2px;-webkit-text-stroke:0.2px #3c3c3c;">Ctrl + P</div>
<div class="t" style="top:369.40px;font-size:16px;color:#1f1f1f;left:744.4px;letter-spacing:0.3px;-webkit-text-stroke:0.2px #1f1f1f;">Найти и изменить</div>
<div class="t" style="top:408.10px;font-size:16px;color:#1f1f1f;left:744.4px;-webkit-text-stroke:0.2px #1f1f1f;">Трансляция...</div>

<div id="topborder"></div>
<div id="leftborder"></div>
</body></html>
